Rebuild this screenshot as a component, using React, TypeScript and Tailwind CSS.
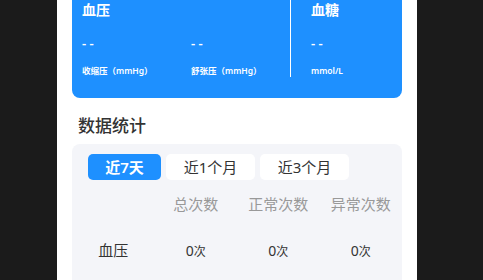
import React from 'react'

const FONT = { fontFamily: '"Noto Sans", "Noto Sans CJK SC", sans-serif' }

const ROWS = [{ label: '血压', total: 0, normal: 0, abnormal: 0 }]

export default function App() {
  return (
    <div className="w-[483px] h-[280px] bg-[#1b1b1b] flex overflow-hidden pl-[57px]" style={FONT}>
      <div className="w-[360px] h-full bg-white px-[15px]">
        <div className="bg-[#1e90ff] rounded-b-[8px] h-[98px] flex text-white">
          <div className="w-[219px] h-[77px] border-r border-white pl-[10px] flex flex-col">
            <p className="text-[14px] font-semibold leading-none mt-[3px]">血压</p>
            <div className="flex mt-[20px]">
              <div className="w-[109px]">
                <p className="text-[13px] font-semibold leading-none">- -</p>
                <p className="text-[8.5px] font-semibold leading-none mt-[17px]">收缩压（mmHg）</p>
              </div>
              <div>
                <p className="text-[13px] font-semibold leading-none">- -</p>
                <p className="text-[8.5px] font-semibold leading-none mt-[17px]">舒张压（mmHg）</p>
              </div>
            </div>
          </div>
          <div className="pl-[20px] flex flex-col">
            <p className="text-[14px] font-semibold leading-none mt-[3px]">血糖</p>
            <p className="text-[13px] font-semibold leading-none mt-[20px]">- -</p>
            <p className="text-[8.5px] font-semibold leading-none mt-[17px]">mmol/L</p>
          </div>
        </div>

        <p className="text-[17px] font-medium text-[#333] leading-none mt-[19px] ml-[6px]">数据统计</p>

        <div className="mt-[10px] bg-[#f4f5f9] rounded-[8px] pt-[10px] pb-[40px]">
          <div className="flex gap-[5px] pl-[16px]">
            <span className="w-[73px] h-[26px] rounded-[5px] bg-[#1e90ff] text-white text-[15px] font-semibold flex items-center justify-center">近7天</span>
            <span className="w-[89px] h-[26px] rounded-[5px] bg-white text-[#333] text-[15px] flex items-center justify-center">近1个月</span>
            <span className="w-[89px] h-[26px] rounded-[5px] bg-white text-[#333] text-[15px] flex items-center justify-center">近3个月</span>
          </div>
          <div className="grid grid-cols-4 mt-[17px] text-[15px] text-[#999] text-center leading-none">
            <span />
            <span>总次数</span>
            <span>正常次数</span>
            <span>异常次数</span>
          </div>
          {ROWS.map(r => (
            <div key={r.label} className="grid grid-cols-4 mt-[31px] text-center items-center leading-none text-[#333]">
              <span className="text-[15px]">{r.label}</span>
              <span className="text-[14px]">{r.total}<span className="text-[12px]">次</span></span>
              <span className="text-[14px]">{r.normal}<span className="text-[12px]">次</span></span>
              <span className="text-[14px]">{r.abnormal}<span className="text-[12px]">次</span></span>
            </div>
          ))}
        </div>
      </div>
    </div>
  )
}
